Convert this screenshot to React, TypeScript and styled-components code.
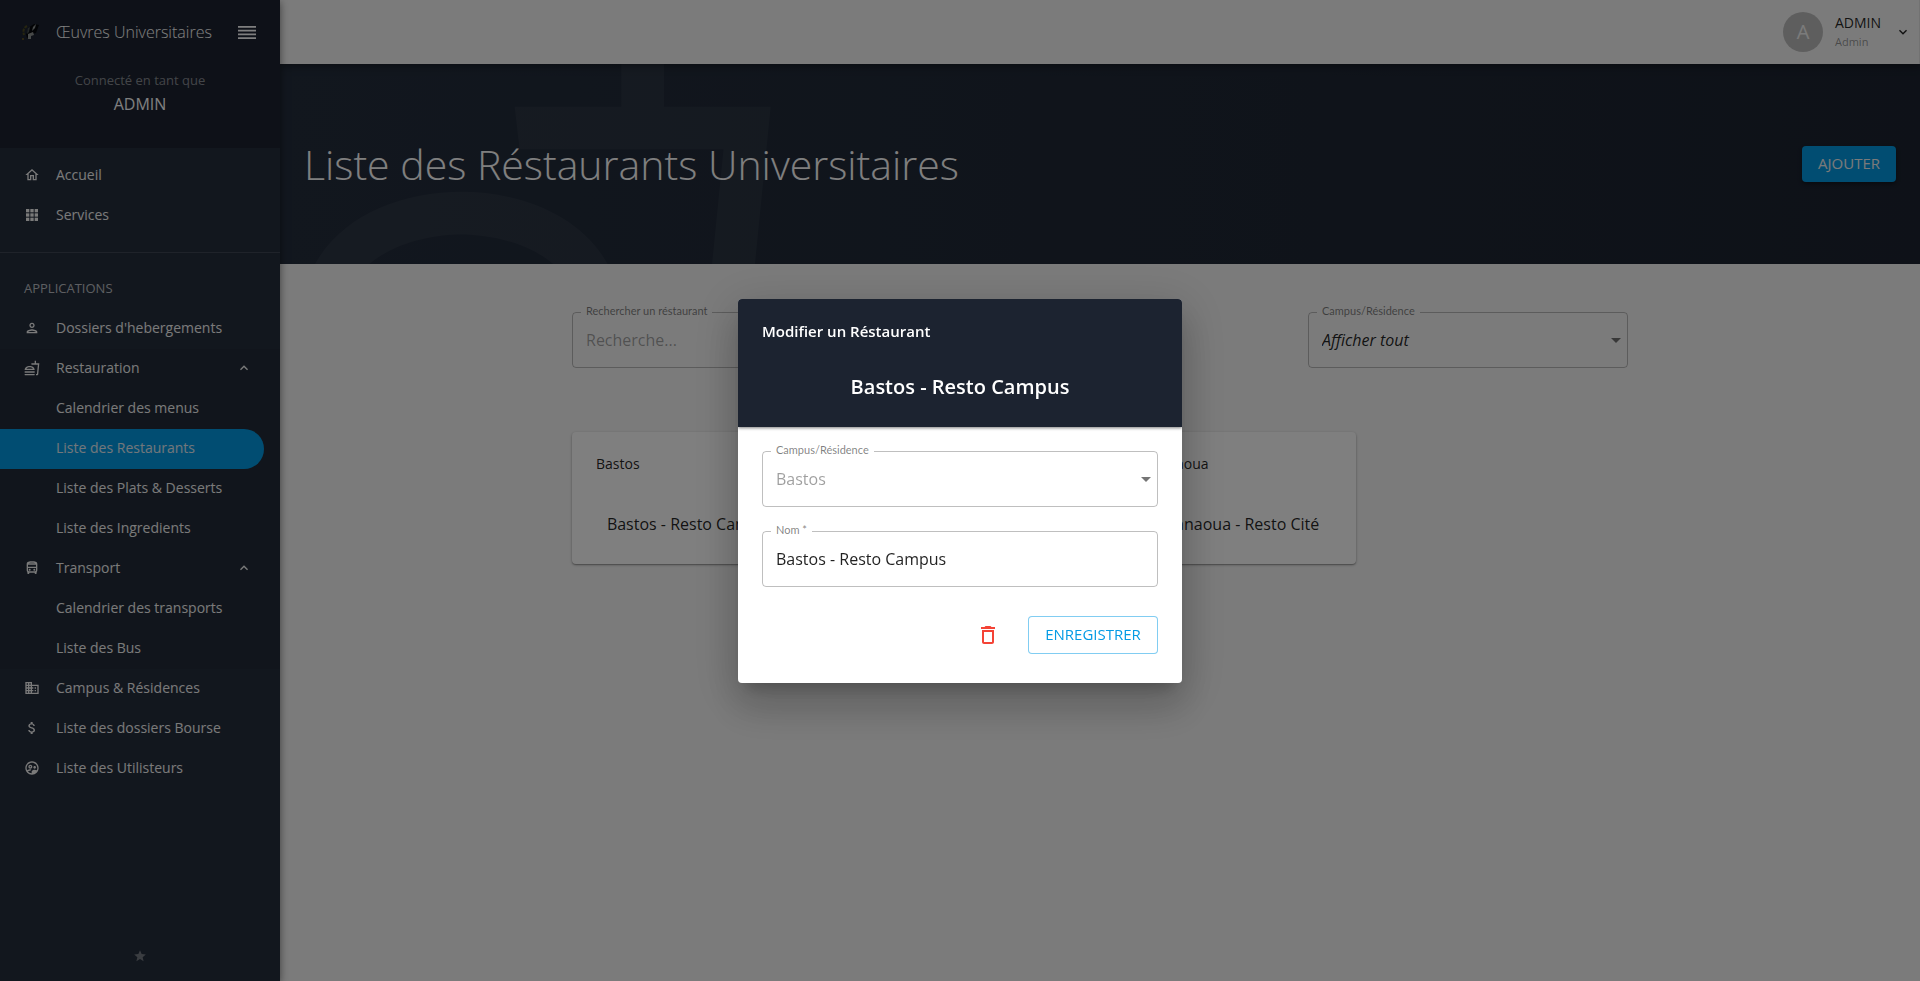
import React from "react";
import styled, { createGlobalStyle } from "styled-components";
import {
  MdArrowDropDown,
  MdAttachMoney,
  MdBusiness,
  MdDeleteOutline,
  MdExpandLess,
  MdExpandMore,
  MdOutlineDirectionsBusFilled,
  MdOutlineFastfood,
  MdOutlineHome,
  MdOutlinePerson,
  MdOutlineSupervisedUserCircle,
  MdStar,
} from "react-icons/md";

const navy = "#242e3d";
const navyDark = "#1c2330";
const blue = "#039be5";
const paper = "#f7f7f7";

const GlobalStyle = createGlobalStyle`
  *, *::before, *::after { box-sizing: border-box; }
  body {
    margin: 0;
    background: ${paper};
    color: rgba(0, 0, 0, 0.87);
    font-family: "Open Sans", "Noto Sans", sans-serif;
    font-size: 14px;
    line-height: 20px;
  }
  h1, h2, h3, p, ul { margin: 0; padding: 0; }
  ul { list-style: none; }
  button, input, select { font: inherit; color: inherit; }
  button { cursor: pointer; }
  a { color: inherit; text-decoration: none; }
`;

const Layout = styled.div`
  display: flex;
  min-height: 100vh;
`;

/* Sidebar */

const Sidebar = styled.aside`
  display: flex;
  flex-direction: column;
  flex: 0 0 280px;
  background: ${navy};
  color: #fff;
  box-shadow: 0 2px 8px rgba(0, 0, 0, 0.5);
  z-index: 3;
`;

const SidebarHeader = styled.header`
  height: 148px;
  background: ${navyDark};
`;

const BrandRow = styled.div`
  display: flex;
  align-items: center;
  height: 64px;
  padding: 0 20px;
`;

const BrandLogo = styled.svg`
  width: 20px;
  height: 20px;
  margin-right: 16px;
`;

const BrandName = styled.span`
  flex: 1;
  font-size: 16px;
  font-weight: 300;
  white-space: nowrap;
`;

const MenuButton = styled.button`
  display: flex;
  padding: 4px;
  border: 0;
  background: none;

  svg {
    width: 18px;
    height: 13px;
  }
`;

const UserSummary = styled.div`
  padding-top: 4px;
  text-align: center;
  line-height: 24px;
`;

const UserCaption = styled.p`
  font-size: 13px;
  color: rgba(255, 255, 255, 0.48);
`;

const UserTitle = styled.p`
  font-size: 16px;
`;

const NavList = styled.ul`
  padding-top: 8px;
`;

const NavDivider = styled.hr`
  height: 1px;
  margin: 16px 0;
  border: 0;
  background: rgba(255, 255, 255, 0.12);
`;

const NavHeading = styled.h2`
  padding: 0 0 2px 24px;
  font-size: 13px;
  font-weight: 400;
  line-height: 38px;
  color: rgba(255, 255, 255, 0.7);
`;

const NavGroup = styled.div`
  background: #222b38;
`;

const NavLink = styled.a<{ $active?: boolean; $nested?: boolean }>`
  display: flex;
  align-items: center;
  gap: 16px;
  height: 40px;
  margin-right: 16px;
  padding: 0 12px 2px ${(p) => (p.$nested ? 56 : 24)}px;
  border-radius: 0 20px 20px 0;
  background: ${(p) => (p.$active ? blue : "transparent")};
  color: ${(p) => (p.$active ? "#e4eef6" : "#f4f4f4")};
  white-space: nowrap;

  svg {
    flex: none;
    width: 16px;
    height: 16px;
  }
`;

const NavToggle = styled(NavLink).attrs({ as: "button", type: "button" })`
  width: calc(100% - 16px);
  border: 0;
  text-align: left;

  span {
    flex: 1;
  }
`;

const SidebarFooter = styled.footer`
  display: flex;
  justify-content: center;
  align-items: center;
  height: 50px;
  margin-top: auto;
  font-size: 14px;
  color: #757a82;
`;

/* Page */

const Page = styled.div`
  flex: 1;
  min-width: 0;
`;

const TopBar = styled.header`
  position: relative;
  display: flex;
  justify-content: flex-end;
  height: 64px;
  border-right: 1px solid #e4e4e4;
  background: ${paper};
  box-shadow: 0 2px 8px rgba(0, 0, 0, 0.4);
  z-index: 2;
`;

const AccountButton = styled.button`
  display: flex;
  align-items: center;
  gap: 12px;
  padding: 0 8px 0 16px;
  border: 0;
  background: none;
  text-align: left;
  font-size: 16px;
`;

const Avatar = styled.span`
  display: grid;
  place-items: center;
  width: 40px;
  height: 40px;
  border-radius: 50%;
  background: #bdbdbd;
  color: ${paper};
  font-size: 20px;
`;

const AccountText = styled.span`
  display: flex;
  flex-direction: column;
  width: 48px;
  font-size: 14px;
`;

const AccountRole = styled.small`
  font-size: 11px;
  line-height: 18px;
  color: rgba(0, 0, 0, 0.42);
`;

const Banner = styled.section`
  position: relative;
  display: flex;
  justify-content: space-between;
  align-items: center;
  height: 200px;
  padding: 0 24px;
  overflow: hidden;
  background: linear-gradient(to right, ${navy}, ${navyDark});
  color: #fff;
`;

const BannerArt = styled(MdOutlineFastfood)`
  position: absolute;
  left: 0;
  top: -64px;
  font-size: 512px;
  opacity: 0.04;
`;

const BannerTitle = styled.h1`
  position: relative;
  font-size: 41px;
  font-weight: 300;
  line-height: 48px;
`;

const AddButton = styled.button`
  height: 36px;
  padding: 0 16px 2px;
  border: 0;
  border-radius: 4px;
  background: ${blue};
  box-shadow: 0 2px 4px rgba(0, 0, 0, 0.4);
  color: #f4f4f4;
  font-size: 15px;
`;

const Content = styled.main`
  max-width: 1104px;
  margin: 0 auto;
  padding: 48px 24px;
`;

const Filters = styled.div`
  display: flex;
  justify-content: space-between;
  margin-bottom: 64px;
`;

const CardGrid = styled.div`
  display: grid;
  grid-template-columns: repeat(4, 1fr);
  gap: 32px;
`;

const Card = styled.article<{ $column: number }>`
  grid-column: ${(p) => p.$column};
  height: 132px;
  padding: 20px 24px 0;
  border-radius: 4px;
  background: #fff;
  box-shadow: 0 1px 3px rgba(0, 0, 0, 0.3), 0 1px 1px rgba(0, 0, 0, 0.2);
`;

const CardTitle = styled.h3`
  margin-bottom: 28px;
  font-size: 14px;
  font-weight: 400;
  line-height: 24px;
`;

const CardAction = styled.button`
  display: block;
  width: 100%;
  padding: 8px;
  border: 0;
  background: none;
  font-size: 16px;
  line-height: 24px;
  white-space: nowrap;
`;

/* Outlined form controls */

const FieldBox = styled.div<{ $width?: string; $surface: string }>`
  position: relative;
  width: ${(p) => p.$width ?? "100%"};

  label {
    position: absolute;
    left: 9px;
    top: -8px;
    padding: 0 5px;
    background: ${(p) => p.$surface};
    color: rgba(0, 0, 0, 0.5);
    font-family: Lato, "Open Sans", sans-serif;
    font-size: 11px;
    line-height: 14px;
  }

  svg {
    position: absolute;
    right: 0;
    top: 16px;
    font-size: 24px;
    color: rgba(0, 0, 0, 0.54);
    pointer-events: none;
  }
`;

const controlStyle = `
  display: block;
  width: 100%;
  height: 56px;
  padding: 0 13px;
  border: 1px solid rgba(0, 0, 0, 0.25);
  border-radius: 4px;
  outline: 0;
  background: transparent;
  font-size: 16px;
`;

const TextInput = styled.input`
  ${controlStyle}
  &::placeholder {
    color: rgba(0, 0, 0, 0.36);
  }
`;

const SelectInput = styled.select<{ $italic?: boolean }>`
  ${controlStyle}
  appearance: none;
  font-style: ${(p) => (p.$italic ? "italic" : "normal")};
  &:disabled {
    color: rgba(0, 0, 0, 0.38);
    opacity: 1;
  }
`;

/* Dialog */

const Backdrop = styled.div`
  position: fixed;
  inset: 0;
  display: flex;
  justify-content: center;
  align-items: center;
  background: rgba(0, 0, 0, 0.5);
  z-index: 10;
`;

const Dialog = styled.section`
  width: 444px;
  overflow: hidden;
  border-radius: 4px;
  background: #fff;
  box-shadow: 0 11px 15px -7px rgba(0, 0, 0, 0.2), 0 24px 38px 3px rgba(0, 0, 0, 0.14),
    0 9px 46px 8px rgba(0, 0, 0, 0.12);
`;

const DialogHeader = styled.header`
  height: 128px;
  padding: 0 24px;
  background: ${navyDark};
  box-shadow: 0 1px 3px rgba(0, 0, 0, 0.5);
  color: #fff;
`;

const DialogTitle = styled.h2`
  font-size: 15px;
  font-weight: 600;
  line-height: 64px;
`;

const DialogSubject = styled.p`
  font-size: 20px;
  font-weight: 600;
  line-height: 48px;
  text-align: center;
`;

const DialogForm = styled.form`
  display: flex;
  flex-direction: column;
  gap: 24px;
  padding: 24px;
`;

const DialogActions = styled.div`
  display: flex;
  justify-content: flex-end;
  align-items: center;
  gap: 16px;
  height: 48px;
`;

const DeleteButton = styled.button`
  display: grid;
  place-items: center;
  width: 48px;
  height: 48px;
  padding: 0;
  border: 0;
  background: none;
  color: #f44336;
  font-size: 24px;
`;

const SaveButton = styled.button`
  width: 130px;
  height: 38px;
  padding: 0 0 2px;
  border: 1px solid rgba(3, 155, 229, 0.5);
  border-radius: 4px;
  background: #fff;
  color: ${blue};
  font-size: 15px;
`;

function GridIcon() {
  const steps = [3, 9.5, 16];
  return (
    <svg viewBox="0 0 24 24" fill="currentColor" aria-hidden="true">
      {steps.map((y) => steps.map((x) => <rect key={`${x}-${y}`} x={x} y={y} width="5" height="5" />))}
    </svg>
  );
}

function MenuIcon() {
  return (
    <svg viewBox="0 0 18 13" fill="currentColor" aria-hidden="true">
      <path d="M0 0h18v1.8H0zM0 3.8h18v1.8H0zM0 7.5h18v1.8H0zM0 11.2h18V13H0z" />
    </svg>
  );
}

type Entry = { label: string; icon?: React.ElementType; active?: boolean; children?: Entry[] };

const mainEntries: Entry[] = [
  { label: "Accueil", icon: MdOutlineHome },
  { label: "Services", icon: GridIcon },
];

const applicationEntries: Entry[] = [
  { label: "Dossiers d'hebergements", icon: MdOutlinePerson },
  {
    label: "Restauration",
    icon: MdOutlineFastfood,
    children: [
      { label: "Calendrier des menus" },
      { label: "Liste des Restaurants", active: true },
      { label: "Liste des Plats & Desserts" },
      { label: "Liste des Ingredients" },
    ],
  },
  {
    label: "Transport",
    icon: MdOutlineDirectionsBusFilled,
    children: [{ label: "Calendrier des transports" }, { label: "Liste des Bus" }],
  },
  { label: "Campus & Résidences", icon: MdBusiness },
  { label: "Liste des dossiers Bourse", icon: MdAttachMoney },
  { label: "Liste des Utilisteurs", icon: MdOutlineSupervisedUserCircle },
];

const restaurants = [
  { campus: "Bastos", name: "Bastos - Resto Campus", column: 1 },
  { campus: "Mvanaoua", name: "Mvanaoua - Resto Cité", column: 3 },
];

function NavEntry({ entry, nested }: { entry: Entry; nested?: boolean }) {
  const Icon = entry.icon;
  if (entry.children) {
    return (
      <li>
        <NavGroup>
          <NavToggle aria-expanded="true">
            {Icon && <Icon />}
            <span>{entry.label}</span>
            <MdExpandLess />
          </NavToggle>
          <ul>
            {entry.children.map((child) => (
              <NavEntry key={child.label} entry={child} nested />
            ))}
          </ul>
        </NavGroup>
      </li>
    );
  }
  return (
    <li>
      <NavLink href="#" $active={entry.active} $nested={nested}>
        {Icon && <Icon />}
        {entry.label}
      </NavLink>
    </li>
  );
}

function Logo() {
  return (
    <BrandLogo viewBox="0 0 20 20" aria-hidden="true">
      <path d="M7 4C3 6 3 10 4 13" fill="none" stroke="#4d4a20" strokeWidth="2" strokeDasharray="3 1" />
      <circle cx="3" cy="17" r="1" fill="#6a5a20" />
      <path d="M8 6l6-4 5 1-3 8-4 1-5 4-1-4 3-3z" fill="#05070a" />
      <path d="M13 5l3-3-1 4-3 3z" fill="#8b9090" />
      <path d="M8 6l2-1-1 5-2 2z" fill="#454c4b" />
      <path d="M8 12l5-2 1 3-3 1v3H8z" fill="#8f9290" />
    </BrandLogo>
  );
}

export default function App() {
  return (
    <>
      <GlobalStyle />
      <Layout>
        <Sidebar>
          <SidebarHeader>
            <BrandRow>
              <Logo />
              <BrandName>Œuvres Universitaires</BrandName>
              <MenuButton type="button" aria-label="Menu">
                <MenuIcon />
              </MenuButton>
            </BrandRow>
            <UserSummary>
              <UserCaption>Connecté en tant que</UserCaption>
              <UserTitle>ADMIN</UserTitle>
            </UserSummary>
          </SidebarHeader>
          <nav>
            <NavList>
              {mainEntries.map((entry) => (
                <NavEntry key={entry.label} entry={entry} />
              ))}
            </NavList>
            <NavDivider />
            <NavHeading>APPLICATIONS</NavHeading>
            <ul>
              {applicationEntries.map((entry) => (
                <NavEntry key={entry.label} entry={entry} />
              ))}
            </ul>
          </nav>
          <SidebarFooter>
            <MdStar />
          </SidebarFooter>
        </Sidebar>

        <Page>
          <TopBar>
            <AccountButton type="button">
              <Avatar>A</Avatar>
              <AccountText>
                ADMIN
                <AccountRole>Admin</AccountRole>
              </AccountText>
              <MdExpandMore />
            </AccountButton>
          </TopBar>
          <Banner>
            <BannerArt />
            <BannerTitle>Liste des Réstaurants Universitaires</BannerTitle>
            <AddButton type="button">AJOUTER</AddButton>
          </Banner>
          <Content>
            <Filters>
              <FieldBox $width="320px" $surface={paper}>
                <TextInput id="search" placeholder="Recherche..." />
                <label htmlFor="search">Rechercher un réstaurant</label>
              </FieldBox>
              <FieldBox $width="320px" $surface={paper}>
                <SelectInput id="campus-filter" $italic>
                  <option>Afficher tout</option>
                </SelectInput>
                <label htmlFor="campus-filter">Campus/Résidence</label>
                <MdArrowDropDown />
              </FieldBox>
            </Filters>
            <CardGrid>
              {restaurants.map((r) => (
                <Card key={r.name} $column={r.column}>
                  <CardTitle>{r.campus}</CardTitle>
                  <CardAction type="button">{r.name}</CardAction>
                </Card>
              ))}
            </CardGrid>
          </Content>
        </Page>
      </Layout>

      <Backdrop>
        <Dialog role="dialog" aria-modal="true" aria-labelledby="dialog-title">
          <DialogHeader>
            <DialogTitle id="dialog-title">Modifier un Réstaurant</DialogTitle>
            <DialogSubject>Bastos - Resto Campus</DialogSubject>
          </DialogHeader>
          <DialogForm>
            <FieldBox $surface="#fff">
              <SelectInput id="campus" disabled>
                <option>Bastos</option>
              </SelectInput>
              <label htmlFor="campus">Campus/Résidence</label>
              <MdArrowDropDown />
            </FieldBox>
            <FieldBox $surface="#fff">
              <TextInput id="name" required defaultValue="Bastos - Resto Campus" />
              <label htmlFor="name">Nom *</label>
            </FieldBox>
            <DialogActions>
              <DeleteButton type="button" aria-label="Supprimer">
                <MdDeleteOutline />
              </DeleteButton>
              <SaveButton type="submit">ENREGISTRER</SaveButton>
            </DialogActions>
          </DialogForm>
        </Dialog>
      </Backdrop>
    </>
  );
}
